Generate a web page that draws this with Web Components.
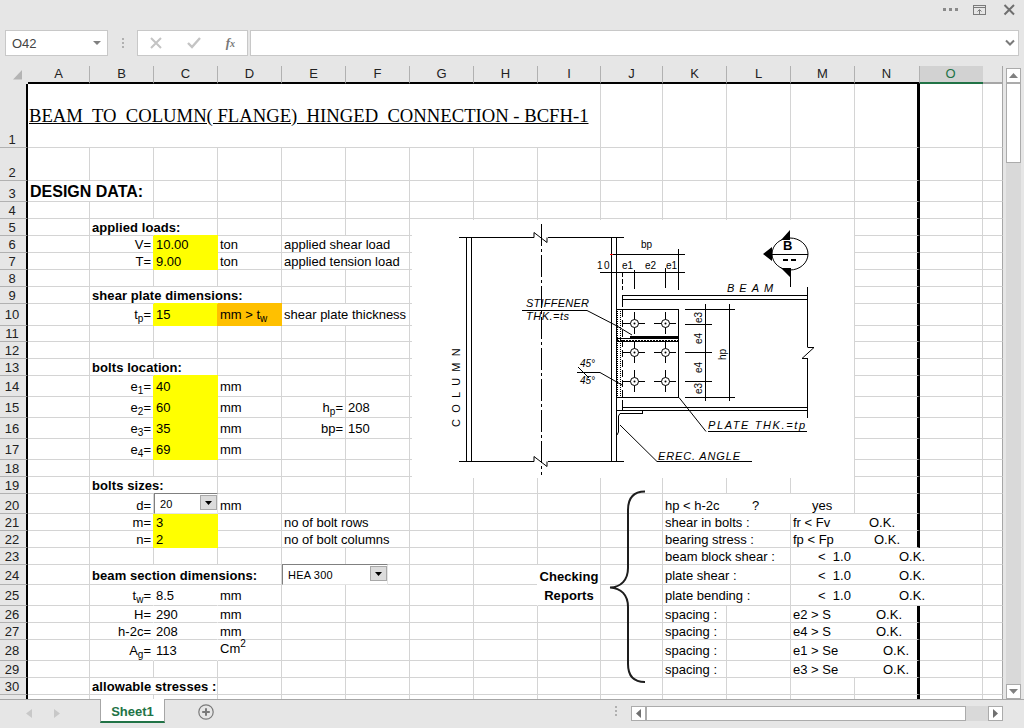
<!DOCTYPE html>
<html><head><meta charset="utf-8">
<style>html,body{margin:0;padding:0;background:#e6e6e6;overflow:hidden}</style>
</head><body>
<x-app></x-app>
<script>
const C_HEAD='#b1b1b1';
function def(name,html,extra){
  customElements.define(name,class extends HTMLElement{
    constructor(){super();this.attachShadow({mode:'open'}).innerHTML=typeof html==='function'?html(this):html;}
  });
}
def('x-titlebar',`<style>:host{display:flex;height:30px;justify-content:flex-end;align-items:flex-start;box-sizing:border-box}
svg{display:block}</style>
<svg width="90" height="20" viewBox="934 0 90 20" fill="none" stroke="#7a7a7a">
<g fill="#8a8a8a" stroke="none"><rect x="943" y="8" width="3" height="3"/><rect x="949" y="8" width="3" height="3"/><rect x="955" y="8" width="3" height="3"/></g>
<rect x="973.5" y="5.5" width="12" height="9" stroke-width="1"/><path d="M974 7.5H985" stroke-width="1"/><path d="M979.5 14V10M977.5 11.5L979.5 9.5L981.5 11.5" stroke-width="1"/>
<path d="M1004.5 5L1014 14.5M1014 5L1004.5 14.5" stroke-width="2" stroke="#6f6f6f"/>
</svg>`);
def('x-formulabar',`<style>:host{display:flex;height:26px;padding-left:5px;padding-right:5px;font:13px "Liberation Sans",sans-serif;color:#444}
.box{background:#fff;border:1px solid #c8c8c8;box-sizing:border-box;height:26px;display:flex;align-items:center}
.name{width:103px;padding-left:6px;padding-right:6px;justify-content:space-between}
.dots{width:29px;display:flex;justify-content:center;align-items:center}
.btns{width:111px;justify-content:space-between;padding:0 12px}
.input{margin-left:2px;flex:1;justify-content:flex-end;padding-right:2px}
.fx{font:italic bold 13px "Liberation Serif",serif;color:#777}
</style>
<div class="box name"><span>O42</span><svg width="8" height="4" viewBox="0 0 8 4"><path d="M0 0H8L4 4Z" fill="#808080"/></svg></div>
<div class="dots"><svg width="2" height="11" viewBox="0 0 2 11" fill="#b0b0b0"><rect y="0" width="2" height="2"/><rect y="4" width="2" height="2"/><rect y="8" width="2" height="2"/></svg></div>
<div class="box btns">
<svg width="12" height="12" viewBox="0 0 12 12"><path d="M1 1L11 11M11 1L1 11" stroke="#c4c4c4" stroke-width="2" fill="none"/></svg>
<svg width="14" height="12" viewBox="0 0 14 12"><path d="M1 6L5 10L13 1" stroke="#c4c4c4" stroke-width="2.4" fill="none"/></svg>
<span class="fx">f<span style="font-size:10px">x</span></span></div>
<div class="box input"><svg width="12" height="8" viewBox="0 0 12 8"><path d="M2 1.5L6 5.5L10 1.5" stroke="#7a7a7a" stroke-width="2" fill="none"/></svg></div>`);

def('x-combo',`<style>:host{display:block;box-sizing:border-box;background:#fff;border-top:1px solid #808080;border-left:1px solid #808080;border-right:1px solid #e4e4e4;border-bottom:1px solid #e4e4e4;height:21px;margin-top:-1px;align-self:start;font:11px "Liberation Sans",sans-serif;color:#000}
.w{display:flex;height:100%;justify-content:space-between}
.t{padding:3px 0 0 5px;line-height:14px;letter-spacing:.2px}
.b{width:17px;height:15px;margin-top:1px;background:#dcdcdc;border:1px solid #a8a8a8;box-sizing:border-box;display:flex;align-items:center;justify-content:center}
</style><div class="w"><span class="t"><slot></slot></span><span class="b"><svg width="7" height="4" viewBox="0 0 7 4"><path d="M0 0H7L3.5 4Z" fill="#000"/></svg></span></div>`);

def('x-brace',`<style>:host{display:block;pointer-events:none;width:40px;height:196px;margin-left:7px;margin-top:-4px;align-self:start}svg{display:block}</style>
<svg width="40" height="196" viewBox="608 490 40 196" fill="none"><path d="M645 491.5C634 491.5 628 498 628 510V568C628 580 621 587 610 587.5C621 588 628 595 628 607V664C628 676 634 682 645 682" stroke="#1d1d1d" stroke-width="2"/></svg>`);

def('x-drawing',()=>{
 const bolts=[];
 for(const x of [634,665])for(const y of [323,352,381]){
  bolts.push(`<path d="M${x-11} ${y}.5H${x+11}M${x}.5 ${y-11}V${y+11}"/><circle cx="${x+.5}" cy="${y+.5}" r="4" fill="#fff"/><circle cx="${x+.5}" cy="${y+.5}" r="1" fill="#000" stroke="none"/>`);
 }
 return `<style>:host{display:block;width:442px;height:258px;background:#fff;margin-left:2px;margin-top:1px;align-self:start}
svg{display:block}text{font-family:"Liberation Sans",sans-serif;font-size:10px;fill:#000;stroke:none}
.i{font-style:italic;font-size:11px}.s{font-size:10px}
</style>
<svg width="442" height="258" viewBox="412 220 442 258" fill="none" stroke="#000" stroke-width="1">
<g shape-rendering="crispEdges">
<path d="M459 237.5H534M548 237.5H624M459 461.5H534M548 461.5H624"/>
<path d="M466.5 237V461M471.5 237V461M611.5 237V461M616.5 237V461"/>
<path d="M541.5 224V475" stroke-dasharray="22 3 3 3"/>
<path d="M522 310.5H587M577 372.5H600"/>
<path d="M611 254.5H685M600 272.5H685"/>
<path d="M622.5 272V290" stroke-dasharray="5 2"/><path d="M634.5 270V289M665.5 268V288M678.5 249V290"/>
<path d="M622 295.5H807M622 299.5H807M622 407.5H807M622 410.5H807M622.5 295V300M622.5 407V411"/>
<path d="M807.5 287V347M807.5 358V418"/>
<path d="M617 309.5H678M617 397.5H678M678.5 309V398"/>
<path d="M622.5 300V407" stroke-dasharray="7 3"/>
<path d="M617.5 309V397M620.5 309V397" stroke-dasharray="1 1"/>
<path d="M630 336.5H678" stroke-width="2"/><path d="M617 338.5H678M617 341.5H678"/><path d="M617 340.5H678" stroke-dasharray="2 1"/>
<path d="M685 309.5H735M685 324.5H712M685 352.5H712M685 381.5H712M685 397.5H735"/>
<path d="M705.5 304V401M729.5 304V401"/>
<path d="M708 431.5H807M657 461.5H752"/>
<path d="M620 413.5H642V411M618.5 416V432M617 410.5H622"/>
<path d="M767 254.5H808M790.5 268V287"/>
</g>
<path stroke="#f00" d="M610 254.5H613" shape-rendering="crispEdges"/>
<path d="M534 237.5V232.5L547 242.5V237.5M534 461.5V456.5L547 466.5V461.5M587 310.5L617 326L632 335M600 372.5L622 385M807.5 347.5H814L802 358.5H807.5M679 397.5L706 431.5M620 425L657 461.5M620 413.5L618.5 416M618.5 432L617 435M578 367L589 378"/>
${bolts.join('')}
<ellipse cx="790" cy="254" rx="18" ry="16"/>
<path fill="#000" stroke="none" d="M763 254L772 247V261ZM790 230V240H781ZM781 268H790V277Z"/>
<rect x="783" y="259" width="5" height="2" fill="#000" stroke="none"/><rect x="791" y="259" width="5" height="2" fill="#000" stroke="none"/>
<text x="783" y="250" style="font-size:13px;font-weight:bold">B</text>
<text x="641" y="248" class="s">bp</text>
<text x="597" y="269" class="s" letter-spacing="1.5">10</text>
<text x="622" y="269" class="s">e1</text><text x="645" y="269" class="s">e2</text><text x="666" y="269" class="s">e1</text>
<text x="526" y="307" class="i" textLength="63">STIFFENER</text>
<text x="526" y="320" class="i" textLength="43">THK.=ts</text>
<text x="580" y="367" class="i" style="font-size:10px">45°</text>
<text x="580" y="384" class="i" style="font-size:10px">45°</text>
<text x="727" y="292" class="i" letter-spacing="5">BEAM</text>
<text x="708" y="429" class="i" textLength="97">PLATE  THK.=tp</text>
<text x="658" y="460" class="i" textLength="82">EREC.  ANGLE</text>
<text transform="translate(460,427) rotate(-90)" style="font-size:11px" letter-spacing="6.2">COLUMN</text>
<text transform="translate(702,323) rotate(-90)" class="s">e3</text>
<text transform="translate(702,344) rotate(-90)" class="s">e4</text>
<text transform="translate(702,373) rotate(-90)" class="s">e4</text>
<text transform="translate(702,394) rotate(-90)" class="s">e3</text>
<text transform="translate(726,360) rotate(-90)" class="s">hp</text>
</svg>`;
});

const HEIGHTS=[64,33,21,17,17,17,17,17,17,22,16,17,17,21,21,21,21,17,17,20,17,17,17,20,21,17,17,21,17,17,17];
const WIDTHS=[62,64,64,64,64,64,64,64,63,62,64,64,64,65,63,20];
const LETTERS='ABCDEFGHIJKLMNO'.split('').concat(['']);
const PB={10:3,14:2,15:2,16:2,17:2,24:1,25:2,28:2};
const col=l=>l.charCodeAt(0)-65;
const Y='#ffff00',OR='#ffc000';
const parts=(...p)=>p.map(([t,w])=>w?`<span style="display:inline-block;width:${w}px">${t}</span>`:`<span>${t}</span>`).join('');
const sub=s=>`<sub>${s}</sub>`;
const B=s=>`<b>${s}</b>`;
const nr={nr:1},R={r:1,nr:1},YL={bg:Y};
const DATA={
 1:[['A','I','<span class="title">BEAM  TO  COLUMN( FLANGE)  HINGED  CONNECTION - BCFH-1</span>',{center:1,tp:1}]],
 3:[['A','B','<span class="h1">DESIGN DATA:</span>']],
 5:[['B','C',B('applied loads:')]],
 6:[['B','B','V=',R],['C','C','10.00',YL],['D','D','ton'],['E','F','applied shear load']],
 7:[['B','B','T=',R],['C','C','9.00',YL],['D','D','ton'],['E','F','applied tension load']],
 9:[['B','D',B('shear plate dimensions:')]],
 10:[['B','B','t'+sub('p')+'=',R],['C','C','15',YL],['D','D','mm &gt; t'+sub('w'),{bg:OR}],['E','F','shear plate thickness']],
 13:[['B','C',B('bolts location:')]],
 14:[['B','B','e'+sub('1')+'=',R],['C','C','40',YL],['D','D','mm']],
 15:[['B','B','e'+sub('2')+'=',R],['C','C','60',YL],['D','D','mm'],['E','E','h'+sub('p')+'=',{r:1}],['F','F','208']],
 16:[['B','B','e'+sub('3')+'=',R],['C','C','35',YL],['D','D','mm'],['E','E','bp=',{r:1}],['F','F','150']],
 17:[['B','B','e'+sub('4')+'=',R],['C','C','69',YL],['D','D','mm']],
 19:[['B','C',B('bolts sizes:')]],
 20:[['B','B','d=',{r:1}],['D','D','mm'],['K','M',parts(['hp &lt; h-2c',87],['?',60],['yes'])]],
 21:[['B','B','m=',R],['C','C','3',YL],['E','F','no of bolt rows'],['K','L','shear in bolts :'],['M','N',parts(['fr &lt; Fv',76],['O.K.'])]],
 22:[['B','B','n=',R],['C','C','2',YL],['E','F','no of bolt columns'],['K','L','bearing stress :'],['M','N',parts(['fp &lt; Fp',81],['O.K.'])]],
 23:[['K','L','beam block shear :'],['M','O',parts(['',25],['&lt;  1.0',81],['O.K.'])]],
 24:[['B','D',B('beam section dimensions:')],['K','L','plate shear :'],['M','O',parts(['',25],['&lt;  1.0',81],['O.K.'])]],
 25:[['B','B','t'+sub('w')+'=',R],['C','C','8.5',nr],['D','D','mm'],['K','L','plate bending :'],['M','O',parts(['',25],['&lt;  1.0',81],['O.K.'])]],
 26:[['B','B','H=',R],['C','C','290',nr],['D','D','mm'],['K','K','spacing :'],['M','N',parts(['e2 &gt; S',83],['O.K.'])]],
 27:[['B','B','h-2c=',R],['C','C','208',nr],['D','D','mm'],['K','K','spacing :'],['M','N',parts(['e4 &gt; S',83],['O.K.'])]],
 28:[['B','B','A'+sub('g')+'=',R],['C','C','113',nr],['D','D','<span style="display:inline-block;margin-bottom:2px">Cm<sup>2</sup></span>'],['K','K','spacing :'],['M','N',parts(['e1 &gt; Se',90],['O.K.'])]],
 29:[['K','K','spacing :'],['M','N',parts(['e3 &gt; Se',90],['O.K.'])]],
 30:[['B','C',B('allowable stresses :')]]
};
def('x-sheet',()=>{
 let h='';
 const cp=(c,r,cs=1,rs=1)=>`grid-column:${c+1}/span ${cs};grid-row:${r+1}/span ${rs};`;
 h+=`<div class="ch corner" style="${cp(0,0)}"><svg width="28" height="18" viewBox="0 66 28 18"><path d="M13 79.5L22 70V79.5Z" fill="#b4b4b4"/></svg></div>`;
 WIDTHS.forEach((w,i)=>{h+=`<div class="ch${i==14?' sel':''}${i>=14?' off':''}${i==15?' last':''}${i==13?' n':''}" style="${cp(i+1,0)}">${LETTERS[i]}</div>`;});
 HEIGHTS.forEach((ht,ri)=>{
  const r=ri+1,pb=PB[r]||0,items=DATA[r]||[];
  h+=`<div class="rh" style="${cp(0,r)}padding-bottom:${pb}px">${r}</div>`;
  const used=new Array(16).fill(false);
  items.forEach(it=>{for(let c=col(it[0]);c<=col(it[1]);c++)used[c]=true;});
  if(r==24||r==25)used[8]=true;
  for(let c=0;c<16;c++){ if(!used[c]) h+=cell(c,c,r,'',{},pb); }
  items.forEach(it=>{h+=cell(col(it[0]),col(it[1]),r,it[2],it[3]||{},pb);});
 });
 function cell(c0,c1,r,html,o,pb){
  let st=cp(c0+1,r,c1-c0+1),cl='c';
  if(c1==13)cl+=' thick';
  if(c1==15)cl+=' last';
  if(o.r)cl+=' right';
  if(o.nr)st+='border-right-color:transparent;';
  if(o.bg)st+=`background:${o.bg};border-color:${o.bg};box-shadow:-1px 0 0 ${o.bg},0 -1px 0 ${o.bg};`;
  if(o.center)st+='align-items:center;';
  st+=`padding-bottom:${o.center?0:pb}px;`;
  if(o.tp)st+='padding-left:1px;';
  return `<div class="${cl}" style="${st}">${html?`<span>${html}</span>`:''}</div>`;
 }
 h+=`<div class="c chk" style="${cp(9,24,1,2)}"><b>Checking<br>Reports</b></div>`;
 h+=`<x-drawing style="${cp(7,5,8,15)}"></x-drawing>`;
 h+=`<x-brace style="${cp(10,20,2,11)}"></x-brace>`;
 h+=`<x-combo style="${cp(3,20)}">20</x-combo>`;
 h+=`<x-combo style="${cp(5,24,2)}width:106px;">HEA 300</x-combo>`;
 return `<style>
:host{display:grid;flex:none;width:1003px;height:633px;overflow:hidden;background:#fff;
 grid-template-columns:28px ${WIDTHS.map(w=>w+'px').join(' ')};
 grid-template-rows:18px ${HEIGHTS.map(w=>w+'px').join(' ')};
 font:13px/15px "Liberation Sans",sans-serif;color:#000}
.ch{background:#e6e6e6;box-sizing:border-box;border-right:1px solid ${C_HEAD};border-bottom:2px solid #000;text-align:center;line-height:15px;color:#222}
.ch.n{padding-right:1px}
.ch.corner{border-right:none;border-bottom:none;}
.ch.off{border-bottom:2px solid #a6a6a6}
.ch.sel{background:#d2d2d2;color:#217346;border-right:none;box-shadow:inset 0 -2px 0 #217346;border-bottom:0;padding-right:2px}
.ch.last{border-right:1px solid #a6a6a6}
.rh{background:#e6e6e6;box-sizing:border-box;border-right:2px solid #000;border-bottom:1px solid ${C_HEAD};display:flex;align-items:flex-end;justify-content:center;color:#222;padding-right:2px}
.c{box-sizing:border-box;background:#fff;border-right:1px solid #d4d4d4;border-bottom:1px solid #d4d4d4;display:flex;align-items:flex-end;padding-left:2px;padding-right:2px;white-space:pre;min-width:0}
.c.thick{border-right:3px solid #000}
.c.last{border-right:1px solid #a6a6a6}
.c.right{justify-content:flex-end}
.chk{align-items:flex-start;justify-content:center;text-align:center;line-height:19px;padding-top:2px;border-left:1px solid #fff;margin-left:-1px}
sub{font-size:10px;vertical-align:-3px;line-height:0}
sup{font-size:10px;vertical-align:6px;line-height:0}
b{letter-spacing:.08px}
.title{font:18.67px/20px "Liberation Serif",serif;text-decoration:underline}
.h1{font:bold 16px/18px "Liberation Sans",sans-serif}
</style>${h}`;
});
def('x-vscroll',`<style>:host{display:block;width:21px;height:633px;box-sizing:border-box;padding:2px 3px 0 3px;background:#e6e6e6}
.w{display:flex;flex-direction:column;height:631px;background:#d9d9d9}
.b{height:15px;background:#fff;border:1px solid #ababab;box-sizing:border-box;display:flex;align-items:center;justify-content:center;flex:none}
.t{height:80px;background:#fff;border:1px solid #ababab;box-sizing:border-box;flex:none}
.g{flex:1}</style>
<div class="w"><div class="b"><svg width="9" height="5" viewBox="0 0 9 5"><path d="M4.5 0L9 5H0Z" fill="#808080"/></svg></div><div class="t"></div><div class="g"></div><div class="b"><svg width="9" height="5" viewBox="0 0 9 5"><path d="M0 0H9L4.5 5Z" fill="#808080"/></svg></div></div>`);
def('x-tabbar',`<style>:host{display:flex;height:29px;background:#e6e6e6;box-sizing:border-box;border-top:1px solid #a6a6a6;font:bold 13px/15px "Liberation Sans",sans-serif}
.nav{width:100px;display:flex;padding:9px 0 0 26px;gap:22px;box-sizing:border-box}
.tab{width:65px;height:24px;box-sizing:border-box;margin-top:-1px;background:#fff;border-left:1px solid #a6a6a6;border-right:1px solid #a6a6a6;border-bottom:2px solid #217346;color:#217346;text-align:center;line-height:26px}
.add{display:flex;justify-content:center;padding-top:4px;box-sizing:border-box;height:24px;margin-left:16px;width:50px}
.sp{width:400px;display:flex;justify-content:flex-end;padding:6px 14px 0 0;box-sizing:border-box}
.hs{display:flex;height:15px;margin-top:6px;width:372px;background:#d9d9d9;box-sizing:border-box}
.bb{width:15px;background:#fff;border:1px solid #ababab;box-sizing:border-box;display:flex;align-items:center;justify-content:center;flex:none}
.th{width:320px;background:#fff;border:1px solid #ababab;box-sizing:border-box;flex:none}
.g{flex:1}
</style>
<div class="nav"><svg width="6" height="9" viewBox="0 0 6 9"><path d="M6 0V9L0 4.5Z" fill="#c8c8c8"/></svg><svg width="6" height="9" viewBox="0 0 6 9"><path d="M0 0V9L6 4.5Z" fill="#c8c8c8"/></svg></div>
<div class="tab">Sheet1</div>
<div class="add"><svg width="16" height="16" viewBox="0 0 16 16" fill="none" stroke="#7a7a7a"><circle cx="8" cy="8" r="7.2" stroke-width="1.2"/><path d="M8 4.2V11.8M4.2 8H11.8" stroke-width="2"/></svg></div>
<div class="sp"><svg width="2" height="11" viewBox="0 0 2 11" fill="#b0b0b0"><rect width="2" height="2"/><rect y="4" width="2" height="2"/><rect y="8" width="2" height="2"/></svg></div>
<div class="hs"><div class="bb"><svg width="5" height="9" viewBox="0 0 5 9"><path d="M5 0V9L0 4.5Z" fill="#707070"/></svg></div><div class="th"></div><div class="g"></div><div class="bb"><svg width="5" height="9" viewBox="0 0 5 9"><path d="M0 0V9L5 4.5Z" fill="#707070"/></svg></div></div>`);
def('x-app',`<style>:host{display:flex;flex-direction:column;width:1024px;height:728px;background:#e6e6e6;overflow:hidden}
.bar{margin-bottom:10px}.wb{display:flex;flex:none;height:633px}</style>
<x-titlebar></x-titlebar><x-formulabar class="bar"></x-formulabar>
<div class="wb"><x-sheet></x-sheet><x-vscroll></x-vscroll></div>
<x-tabbar></x-tabbar>`);
</script>
</body></html>
